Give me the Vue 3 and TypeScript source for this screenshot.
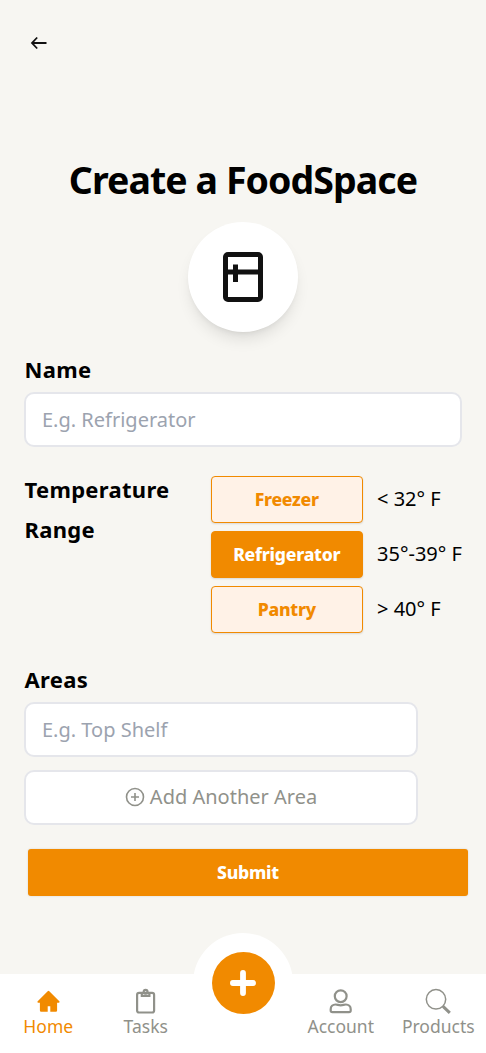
<script setup lang="ts">
import { ref } from 'vue'

interface Range { name: string; label: string }

const ranges: Range[] = [
  { name: 'Freezer', label: '< 32° F' },
  { name: 'Refrigerator', label: '35°-39° F' },
  { name: 'Pantry', label: '> 40° F' },
]
const selected = ref('Refrigerator')
const spaceName = ref('')
const areas = ref<string[]>([''])
</script>

<template>
  <div class="page">
    <header class="top">
      <button class="back" type="button" aria-label="Back">
        <svg width="20" height="20" viewBox="0 0 20 20" fill="none" stroke="#111" stroke-width="1.800">
          <path d="M17.500 10H3M8.200 4.500 3 10l5.200 5.500" />
        </svg>
      </button>
    </header>

    <h1>Create a FoodSpace</h1>
    <div class="avatar">
      <svg width="60" height="60" viewBox="0 0 24 24" fill="#111">
        <path fill-rule="evenodd" d="M6 2h12a2 2 0 0 1 2 2v16a2 2 0 0 1-2 2H6a2 2 0 0 1-2-2V4a2 2 0 0 1 2-2zM6 4v5h2V7h2v2h8V4zM6 11v9h12v-9h-8v3H8v-3z" />
      </svg>
    </div>

    <form class="form" @submit.prevent>
      <label class="label" for="space-name">Name</label>
      <input id="space-name" v-model="spaceName" class="field" placeholder="E.g. Refrigerator" />

      <section class="temperature">
        <div class="label">Temperature Range</div>
        <div class="options">
          <div v-for="range in ranges" :key="range.name" class="option">
            <button
              type="button"
              class="choice"
              :class="{ active: selected === range.name }"
              @click="selected = range.name"
            >{{ range.name }}</button>
            <span>{{ range.label }}</span>
          </div>
        </div>
      </section>

      <section class="areas">
        <div class="label">Areas</div>
        <input v-for="(_, i) in areas" :key="i" v-model="areas[i]" class="field" placeholder="E.g. Top Shelf" />
        <button type="button" class="field add" @click="areas.push('')">
          <svg width="20" height="20" viewBox="0 0 20 20" fill="none" stroke="#90918a" stroke-width="1.600">
            <circle cx="10" cy="10" r="8.500" /><path d="M10 6v8M6 10h8" />
          </svg>
          <span>Add Another Area</span>
        </button>
      </section>
      <button class="submit" type="submit">Submit</button>
    </form>

    <nav class="nav">
      <a class="item current">
        <svg width="24" height="26" viewBox="0 0 24 26" fill="#f18a00">
          <path d="M11.700 3.200a1.200 1.200 0 0 1 1.600 0l10 10c.6.600.3 1.500-.6 1.500H21.100v7.800a1.300 1.300 0 0 1-1.300 1.300h-5.500v-5.600h-2.600V23.800H5.200a1.300 1.300 0 0 1-1.300-1.300v-7.800H2.300c-.9 0-1.200-.9-.6-1.500z" />
        </svg>
        <span>Home</span>
      </a>
      <a class="item">
        <svg width="24" height="26" viewBox="0 0 24 26" fill="none" stroke="#90918a" stroke-width="2.200">
          <rect x="3.100" y="4.800" width="17" height="19.700" rx="2" />
          <path d="M7.800 4.800v3h7.600v-3" />
          <circle cx="11.600" cy="3.700" r="1.900" />
        </svg>
        <span>Tasks</span>
      </a>
      <div class="center">
        <button class="plus" type="button" aria-label="Add">
          <svg width="28" height="28" viewBox="0 0 28 28" stroke="#fff" stroke-width="5.800" stroke-linecap="round">
            <path d="M14 3.900v20.200M3.900 14h20.200" />
          </svg>
        </button>
      </div>
      <a class="item">
        <svg width="24" height="26" viewBox="0 0 24 26" fill="none" stroke="#90918a" stroke-width="2.200">
          <circle cx="11.700" cy="8.200" r="5.900" />
          <path d="M6.500 16.500c2 0 2.900.8 5.200.8s3.200-.8 5.200-.8c2.700 0 4.800 2 4.800 4.700v1.300c0 1-.7 1.700-1.700 1.700H3.400c-1 0-1.700-.7-1.700-1.700v-1.300c0-2.700 2.100-4.700 4.800-4.700z" />
        </svg>
        <span>Account</span>
      </a>
      <a class="item">
        <svg width="26" height="26" viewBox="0 0 26 26" fill="none" stroke="#90918a">
          <circle cx="11" cy="11.300" r="9.700" stroke-width="1.500" />
          <path d="m18 18.300 6.800 6.500" stroke-width="3" />
        </svg>
        <span>Products</span>
      </a>
    </nav>
  </div>
</template>

<style>
body { background: #f7f6f2; }
</style>

<style scoped>
* { box-sizing: border-box; }
.page {
  display: flex;
  flex-direction: column;
  width: 486px;
  height: 1053px;
  overflow: hidden;
  background: #f7f6f2;
  color: #000;
  font-family: "Noto Sans", sans-serif;
}
button, input { font-family: inherit; margin: 0; }
svg { display: block; flex: none; }
.top { height: 153px; padding: 33px 0 0 29px; }
.back { padding: 0; border: 0; background: none; }
h1 {
  margin: 0;
  height: 55px;
  line-height: 54px;
  font-size: 37.500px;
  font-weight: 700;
  letter-spacing: -.94px;
  text-align: center;
}
.avatar {
  display: grid;
  place-items: center;
  width: 110px;
  height: 110px;
  margin: 14px auto 0;
  border-radius: 50%;
  background: #fff;
  box-shadow: 0 10px 15px -3px rgba(0, 0, 0, .1), 0 4px 6px -4px rgba(0, 0, 0, .1);
}
.form { display: flex; flex-direction: column; padding: 17px 24px 0; }
.label {
  display: block;
  padding-left: .5px;
  font-size: 22px;
  font-weight: 700;
  line-height: 40px;
  letter-spacing: .3px;
}
.field {
  display: block;
  width: 438px;
  height: 55px;
  margin-top: 3px;
  padding: 0 16px;
  border: 2px solid #e5e6eb;
  border-radius: 10px;
  background: #fff;
  font-size: 20px;
  outline: none;
}
.field::placeholder { color: #9ca3af; opacity: 1; }
.temperature { display: flex; justify-content: space-between; margin-top: 22px; }
.temperature .label { width: 160px; }
.options { display: flex; flex-direction: column; gap: 8px; width: 251.500px; padding-top: 7px; }
.option { display: flex; align-items: center; gap: 14px; height: 47px; font-size: 20px; white-space: nowrap; }
.option span { position: relative; top: -1px; }
.choice {
  width: 152.500px;
  height: 47px;
  padding: 0 0 2px;
  flex: none;
  border: 1px solid #f18a00;
  border-radius: 4px;
  background: #fff2e7;
  color: #f18a00;
  font-size: 17.600px;
  font-weight: 800;
  letter-spacing: -.25px;
  box-shadow: 0 1px 2px rgba(0, 0, 0, .12);
}
.choice.active { background: #f18a00; color: #fff; }
.areas { margin-top: 26px; }
.areas .field { width: 394px; }
.areas .add {
  display: flex;
  align-items: center;
  justify-content: center;
  gap: 5px;
  margin-top: 13px;
  padding-bottom: 2px;
  color: #90918a;
}
.submit {
  width: 440px;
  height: 47px;
  margin: 24px 0 0 4px;
  padding: 0 0 2px;
  border: 0;
  border-radius: 3px;
  background: #f18a00;
  color: #fff;
  font-size: 17.600px;
  font-weight: 800;
  letter-spacing: -.25px;
  box-shadow: 0 0 2px rgba(0, 0, 0, .15);
}
.nav {
  display: grid;
  grid-template-columns: repeat(5, 97.500px);
  height: 79px;
  margin: auto 0 0 -.5px;
  background: #fff;
}
.item {
  display: flex;
  flex-direction: column;
  align-items: center;
  padding-top: 14px;
  color: #90918a;
  font-size: 17.500px;
  line-height: 25px;
}
.item.current { color: #f18a00; }
.center {
  display: grid;
  place-items: center;
  width: 100px;
  height: 100px;
  margin: -41px 0 0 -1.500px;
  border-radius: 50%;
  background: #fff;
}
.plus {
  display: grid;
  place-items: center;
  width: 63px;
  height: 62px;
  padding: 0;
  border: 0;
  border-radius: 50%;
  background: #f18a00;
}
</style>
